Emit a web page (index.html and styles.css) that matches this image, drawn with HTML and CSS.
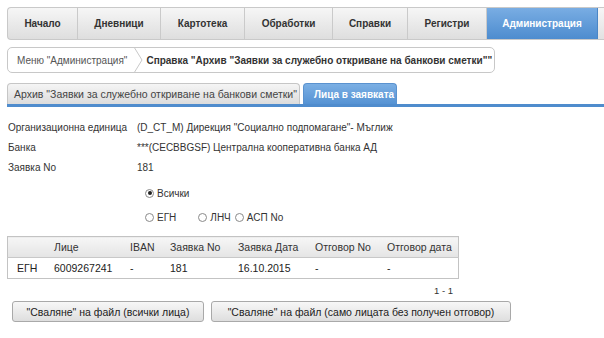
FILE: index.html
```html
<!DOCTYPE html>
<html>
<head>
<meta charset="utf-8">
<link rel="stylesheet" href="styles.css">
</head>
<body>
<div class="page">
  <div class="nav">
    <div class="nav-item w1">Начало</div>
    <div class="nav-item w2">Дневници</div>
    <div class="nav-item w3">Картотека</div>
    <div class="nav-item w4">Обработки</div>
    <div class="nav-item w5">Справки</div>
    <div class="nav-item w6">Регистри</div>
    <div class="nav-item w7 active">Администрация</div>
    <div class="nav-rest"></div>
  </div>

  <div class="crumbs">
    <span class="crumb">Меню "Администрация"</span>
    <svg class="chev" width="10" height="26" viewBox="0 0 10 26"><path d="M1 0 L9 13 L1 26" fill="none" stroke="#c8c8c8" stroke-width="1"/></svg>
    <span class="crumb cur">Справка "Архив "Заявки за служебно откриване на банкови сметки""</span>
  </div>

  <div class="tabs">
    <div class="tab">Архив "Заявки за служебно откриване на банкови сметки"</div>
    <div class="tab on">Лица в заявката</div>
  </div>
  <div class="tabline"></div>

  <div class="info">
    <div class="row"><span class="lbl">Организационна единица</span><span>(D_CT_M) Дирекция "Социално подпомагане"- Мъглиж</span></div>
    <div class="row"><span class="lbl">Банка</span><span>***(CECBBGSF) Централна кооперативна банка АД</span></div>
    <div class="row"><span class="lbl">Заявка No</span><span>181</span></div>
  </div>

  <div class="radios">
    <div class="rrow r1"><span class="radio checked"></span><span>Всички</span></div>
    <div class="rrow r2">
      <span class="radio"></span><span class="rl egn">ЕГН</span>
      <span class="radio"></span><span class="rl lnch">ЛНЧ</span>
      <span class="radio"></span><span class="rl">АСП No</span>
    </div>
  </div>

  <table class="grid">
    <thead>
      <tr><th class="c0"></th><th class="c1">Лице</th><th class="c2">IBAN</th><th class="c3">Заявка No</th><th class="c4">Заявка Дата</th><th class="c5">Отговор No</th><th class="c6">Отговор дата</th></tr>
    </thead>
    <tbody>
      <tr><td>ЕГН</td><td>6009267241</td><td>-</td><td>181</td><td>16.10.2015</td><td>-</td><td>-</td></tr>
    </tbody>
  </table>
  <div class="pager">1 - 1</div>

  <div class="buttons">
    <button class="btn b1">"Сваляне" на файл (всички лица)</button>
    <button class="btn b2">"Сваляне" на файл (само лицата без получен отговор)</button>
  </div>
</div>
</body>
</html>
```

FILE: styles.css
```css
html, body { margin: 0; padding: 0; background: #fff; overflow: hidden; }
body { font-family: "Liberation Sans", Arial, sans-serif; font-size: 10px; color: #333; white-space: nowrap; }
.page { padding: 7px 0 0 7px; width: 604px; box-sizing: border-box; }

.nav { display: flex; height: 33px; width: 610px; border: 1px solid #c9c9c9; border-right: none; border-radius: 4px 0 0 4px; box-sizing: border-box; overflow: hidden; background: linear-gradient(#f6f6f6, #dedede); }
.nav-item { display: flex; align-items: center; justify-content: center; font-weight: bold; font-size: 10px; color: #333; border-right: 1px solid #cacaca; box-sizing: border-box; height: 100%; }
.w1 { width: 70px; } .w2 { width: 83px; } .w3 { width: 84px; } .w4 { width: 88px; } .w5 { width: 75px; } .w6 { width: 79px; } .w7 { width: 111px; }
.nav-item.active { background: linear-gradient(#79ade3, #4d8ccf); color: #fff; border-right-color: #4a86c6; }
.nav-rest { flex: 1; background: linear-gradient(#f6f6f6, #e2e2e2); }

.crumbs { display: flex; align-items: center; margin-top: 7px; width: 488px; height: 26px; border: 1px solid #c8c8c8; border-radius: 5px; box-sizing: border-box; background: #fff; }
.crumb { padding: 0 0 0 9px; color: #555; }
.chev { margin-left: 6px; flex: none; }
.crumb.cur { padding-left: 3px; font-weight: bold; color: #333; }

.tabs { display: flex; margin-top: 10px; height: 21px; align-items: flex-end; gap: 3px; }
.tab { height: 21px; box-sizing: border-box; padding: 0 6px; display: flex; align-items: center; font-size: 10.5px; color: #444; border: 1px solid #c6c6c6; border-bottom: none; border-radius: 4px 4px 0 0; background: linear-gradient(#f5f5f5, #dcdcdc); width: 293px; }
.tab.on { width: 94px; background: linear-gradient(#7bafe4, #5592d3); border-color: #5a92cf; color: #fff; font-weight: bold; padding: 0 0 0 10px; font-size: 10px; }
.tabline { height: 3px; background: #4f8ccd; }

.info { margin-top: 10px; padding-left: 1px; }
.row { display: flex; height: 20px; align-items: center; }
.row .lbl { width: 129px; flex: none; }

.radios { padding-left: 138px; }
.rrow { display: flex; align-items: center; }
.r1 { margin-top: 4px; height: 24px; }
.r2 { height: 24px; }
.radio { width: 9px; height: 9px; border: 1px solid #8a8a8a; border-radius: 50%; box-sizing: border-box; position: relative; margin-right: 3px; background: #fff; flex: none; }
.radio.checked::after { content: ""; position: absolute; left: 1.5px; top: 1.5px; width: 4px; height: 4px; border-radius: 50%; background: #222; }
.rl.egn { margin-right: 22px; }
.rl.lnch { margin-right: 4px; }

.grid { margin-top: 7px; border-collapse: collapse; width: 452px; border: 1px solid #c3c3c3; }
.grid th { height: 20px; font-weight: normal; text-align: left; color: #333; background: linear-gradient(#f6f6f6, #e4e4e4); border-bottom: 1px solid #c8c8c8; padding: 0; font-size: 10.5px; }
.grid td { height: 20px; padding: 0; font-size: 10.5px; color: #222; }
.grid .c0 { width: 46px; } .grid .c1 { width: 76px; } .grid .c2 { width: 40px; } .grid .c3 { width: 68px; } .grid .c4 { width: 77px; } .grid .c5 { width: 72px; }
.grid td:first-child { padding-left: 9px; }
.pager { width: 446px; text-align: right; margin-top: 6px; font-size: 9.5px; height: 12px; }
.buttons { display: flex; gap: 7px; margin-top: 4px; padding-left: 5px; }
.btn { font-family: "Liberation Sans", Arial, sans-serif; font-size: 10.5px; color: #222; height: 21px; border: 1px solid #a9a9a9; border-radius: 3px; background: linear-gradient(#f7f7f7, #dedede); padding: 0; }
.b1 { width: 192px; }
.b2 { width: 300px; }
```
